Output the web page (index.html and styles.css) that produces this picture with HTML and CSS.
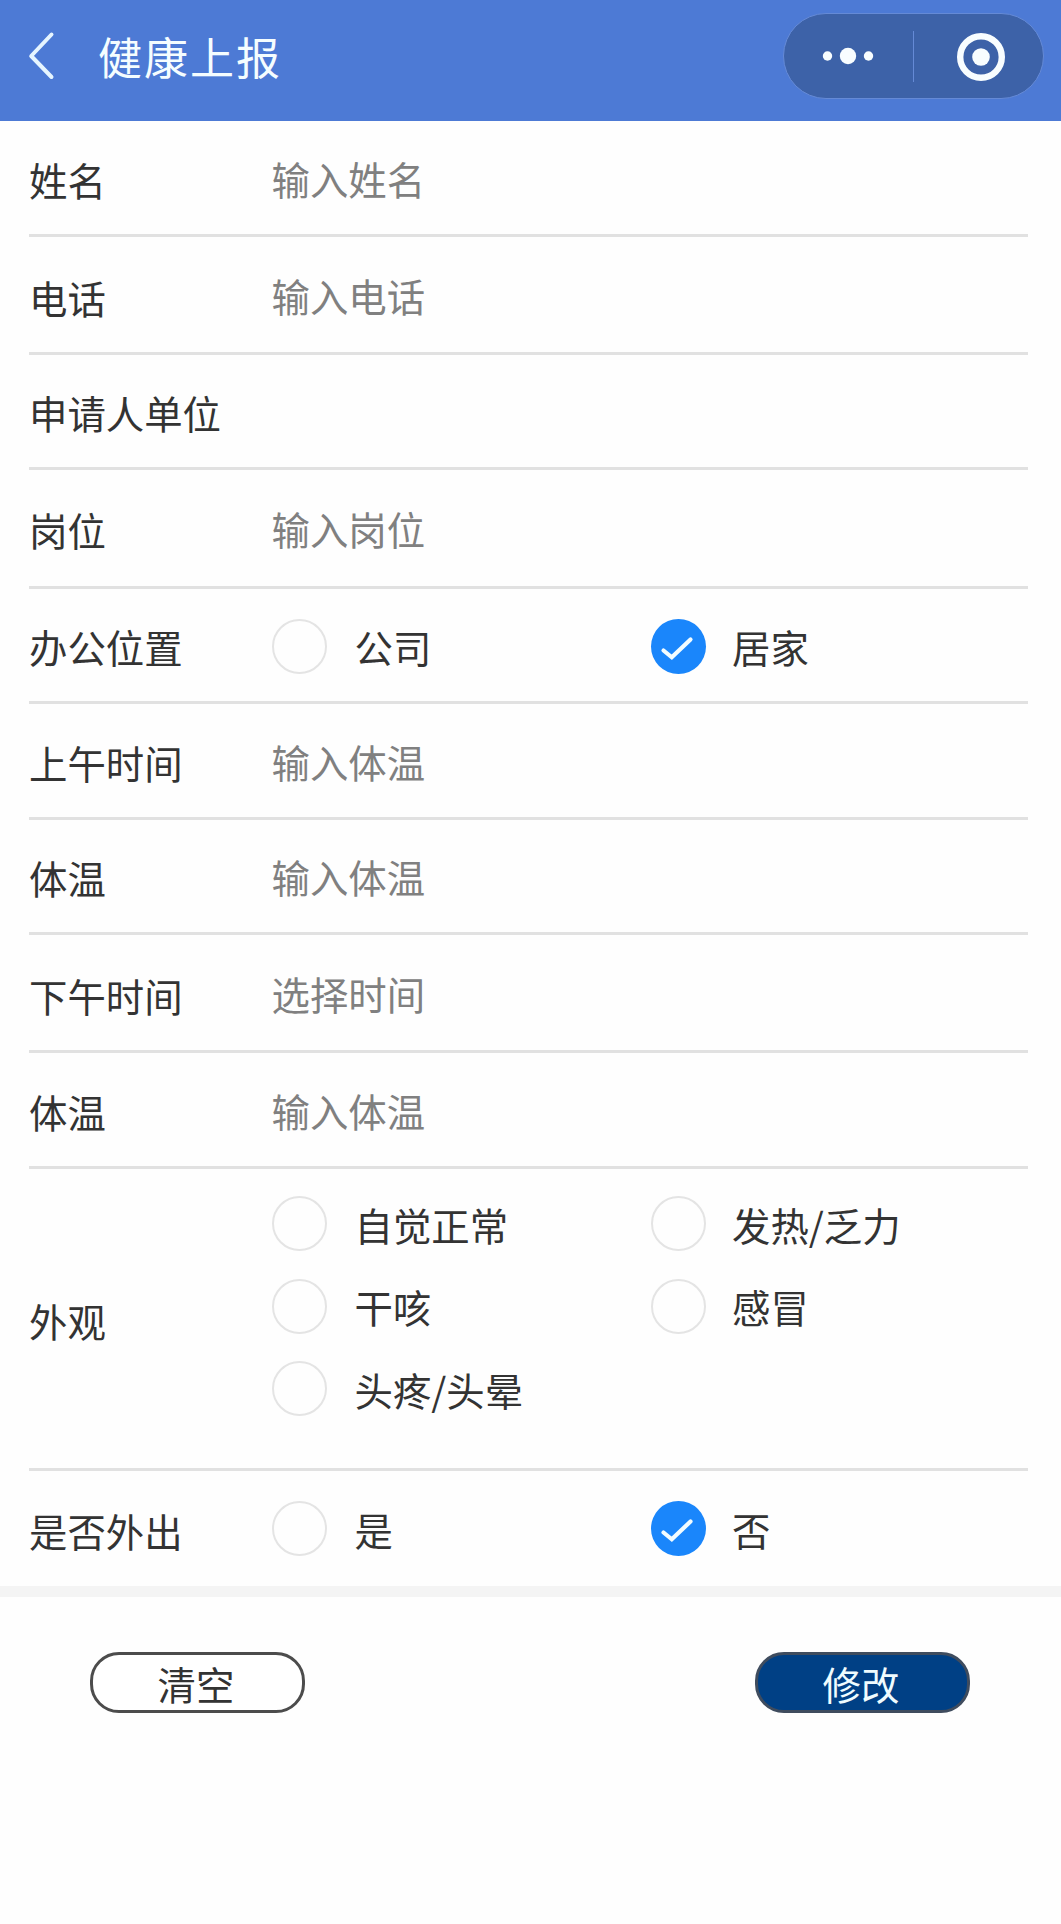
FILE: index.html
```html
<!DOCTYPE html>
<html lang="zh-CN">
<head>
	<meta charset="UTF-8">
	<title>健康上报</title>
	<link rel="stylesheet" href="styles.css">
</head>
<body>
<!-- 顶部导航 -->
	<div class="header">
		<svg class="back" viewBox="0 0 28 50"><path d="M24.5 3.5L4.2 25L24.5 46"/></svg>
		<h1>健康上报</h1>
		<div class="capsule">
			<svg class="more" viewBox="0 0 52 18">
				<circle cx="5.5" cy="9" r="4.7"/>
				<circle cx="26" cy="9" r="8.2"/>
				<circle cx="46.5" cy="9" r="4.7"/>
			</svg>
			<span class="split"></span>
			<svg class="close" viewBox="0 0 50 50">
				<circle class="ring" cx="25" cy="25" r="20.8"/>
				<circle cx="25" cy="25" r="8.8"/>
			</svg>
		</div>
	</div>
<!-- 表单 -->
	<div class="form">
		<div class="row">
			<label>姓名</label>
			<span class="holder">输入姓名</span>
		</div>
		<div class="row low">
			<label>电话</label>
			<span class="holder">输入电话</span>
		</div>
		<div class="row">
			<label>申请人单位</label>
		</div>
		<div class="row">
			<label>岗位</label>
			<span class="holder">输入岗位</span>
		</div>
		<div class="row">
			<label>办公位置</label>
			<div class="options">
				<div class="option"><i class="radio"></i><span>公司</span></div>
				<div class="option"><i class="radio checked"><svg viewBox="0 0 55 55"><path d="M12.5 31.5L20.8 38.3L39.5 20.5"/></svg></i><span>居家</span></div>
			</div>
		</div>
		<div class="row">
			<label>上午时间</label>
			<span class="holder">输入体温</span>
		</div>
		<div class="row">
			<label>体温</label>
			<span class="holder">输入体温</span>
		</div>
		<div class="row low">
			<label>下午时间</label>
			<span class="holder">选择时间</span>
		</div>
		<div class="row">
			<label>体温</label>
			<span class="holder">输入体温</span>
		</div>
		<div class="row look">
			<label>外观</label>
			<div class="options">
				<div class="option"><i class="radio"></i><span>自觉正常</span></div>
				<div class="option"><i class="radio"></i><span>发热/乏力</span></div>
				<div class="option"><i class="radio"></i><span>干咳</span></div>
				<div class="option"><i class="radio"></i><span>感冒</span></div>
				<div class="option"><i class="radio"></i><span>头疼/头晕</span></div>
			</div>
		</div>
		<div class="row">
			<label>是否外出</label>
			<div class="options">
				<div class="option"><i class="radio"></i><span>是</span></div>
				<div class="option"><i class="radio checked"><svg viewBox="0 0 55 55"><path d="M12.5 31.5L20.8 38.3L39.5 20.5"/></svg></i><span>否</span></div>
			</div>
		</div>
	</div>
<!-- 底部按钮 -->
	<div class="footer">
		<button class="clear">清空</button>
		<button class="edit">修改</button>
	</div>
</body>
</html>
```

FILE: styles.css
```css
*{
	margin:0;
	padding:0;
	box-sizing: border-box;
}
body{
	background-color: #fefefe;
	color:#333;
	font-family: "Noto Sans CJK SC", sans-serif;
	font-size: 38.4px;
}
/*顶部导航*/
.header{
	display: flex;
	align-items: center;
	height: 121px;
	padding:0 17px 9px 27px;
	background-color: #4d7ad5;
}
.back{
	width: 28px;
	height: 50px;
}
.back path{
	fill:none;
	stroke:#e6f5ff;
	stroke-width: 4;
	stroke-linecap: round;
	stroke-linejoin: round;
}
.header h1{
	margin-left: 43px;
	color:#f5fdff;
	font-size: 44px;
	font-weight: normal;
	letter-spacing: 2px;
	line-height: 60px;
}
.capsule{
	display: flex;
	align-items: center;
	width: 261px;
	height: 86px;
	margin-left: auto;
	border:1px solid #658ad6;
	border-radius: 43px;
	background-color: #3d62a8;
}
.capsule svg{
	fill:#f8fdff;
}
.more{
	width: 52px;
	height: 18px;
	margin-left: 38px;
}
.split{
	width: 1px;
	height: 51px;
	margin-left: 39px;
	background-color: #658ad6;
}
.close{
	width: 50px;
	height: 50px;
	margin:2px 0 0 42px;
}
.close .ring{
	fill:none;
	stroke:#f8fdff;
	stroke-width: 6.4;
}
/*表单*/
.form{
	display: grid;
	grid-template-rows: 116px 118px 115px 119px 115px 116px 115px 118px 116px 302px 115px;
	padding:0 33px 0 29px;
}
.row{
	display: flex;
	align-items: center;
	border-bottom: 3px solid #e1e1e1;
}
.row:last-child{
	border-bottom: none;
}
.row label{
	flex:none;
	width: 242.5px;
	padding-top: 2px;
	line-height: 56px;
}
.row.low label{
	padding-top: 5px;
}
.holder{
	color:#808080;
	line-height: 56px;
}
.options{
	display: grid;
	grid-template-columns: 379.5px 1fr;
	row-gap: 27.5px;
	flex:1;
	padding-top: 2px;
}
.look .options{
	padding:0 0 25px;
}
.row:last-child .options{
	padding-top: 0;
}
.option{
	display: flex;
	align-items: center;
	height: 55px;
}
.option span{
	margin-left: 28px;
}
.option:nth-child(even) span{
	margin-left: 26px;
}
.radio{
	flex:none;
	width: 55px;
	height: 55px;
	border:2.5px solid #e4e4e4;
	border-radius: 50%;
}
.radio.checked{
	border:none;
	background-color: #1a86fb;
}
.radio svg{
	display: block;
	fill:none;
	stroke:#f2fcff;
	stroke-width: 4.2;
	stroke-linecap: round;
}
/*底部按钮*/
.footer{
	display: flex;
	justify-content: space-between;
	padding:55px 91px 0 90px;
	border-top: 11px solid #f4f4f4;
}
.footer button{
	width: 215px;
	height: 61px;
	padding:1px 3px 0 0;
	border:3px solid #4c4c4c;
	border-radius: 29px;
	background-color: #fff;
	color:#333;
	font-family: inherit;
	font-size: inherit;
	line-height: 55px;
}
.footer .edit{
	border-color: #3f4c5e;
	background-color: #004085;
	color:#effcff;
}
```
